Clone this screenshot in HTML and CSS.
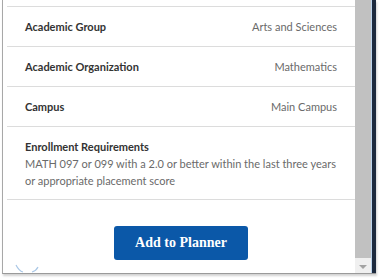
FILE: index.html
```html
<!DOCTYPE html>
<html>
<head>
<meta charset="utf-8">
<link rel="stylesheet" href="styles.css">
</head>
<body>
<div class="frame">
  <div class="content">
    <div class="row">
      <span class="label">Academic Group</span>
      <span class="value">Arts and Sciences</span>
    </div>
    <div class="row">
      <span class="label">Academic Organization</span>
      <span class="value">Mathematics</span>
    </div>
    <div class="row">
      <span class="label">Campus</span>
      <span class="value">Main Campus</span>
    </div>
    <div class="row req">
      <span class="label">Enrollment Requirements</span>
      <span class="desc">MATH 097 or 099 with a 2.0 or better within the last three years or appropriate placement score</span>
    </div>
    <div class="actions">
      <button class="btn">Add to Planner</button>
    </div>
    <svg class="spinner" width="30" height="16" viewBox="0 0 30 16">
      <path d="M3 3 Q6 9 10 10" fill="none" stroke="#a9c7e6" stroke-width="1.2"/>
      <path d="M19 10 Q23 9 25 5" fill="none" stroke="#a9c7e6" stroke-width="1.2"/>
    </svg>
  </div>
  <div class="scrollbar">
    <div class="thumb"></div>
    <div class="arrow"></div>
  </div>
  <div class="edge"></div>
</div>
</body>
</html>
```
FILE: styles.css
```css
html, body {
  margin: 0;
  padding: 0;
  background: #ffffff;
}
body {
  width: 380px;
  height: 280px;
  overflow: hidden;
  font-family: Lato, "Open Sans", sans-serif;
}
.frame {
  margin-left: 2px;
  width: 373px;
  height: 273px;
  border-left: 1px solid #a8a8a8;
  border-bottom: 1px solid #9a9a9a;
  box-shadow: 1px 2px 2px rgba(0,0,0,0.18);
  display: flex;
}
.content {
  position: relative;
  width: 348px;
  padding-left: 4px;
  padding-top: 6px;
  box-sizing: content-box;
}
.row {
  height: 39px;
  border-top: 1px solid #dcdcdc;
  display: flex;
  align-items: center;
  justify-content: space-between;
  padding: 0 18px;
  font-size: 11px;
}
.label {
  font-weight: bold;
  color: #333333;
}
.value {
  color: #6a6a6a;
}
.row.req {
  height: auto;
  display: flex;
  flex-direction: column;
  align-items: flex-start;
  justify-content: flex-start;
  padding-top: 11px;
  padding-bottom: 10px;
  line-height: 17px;
  border-bottom: 1px solid #dcdcdc;
}
.desc {
  color: #6a6a6a;
}
.actions {
  display: flex;
  justify-content: center;
  padding-top: 26px;
}
.btn {
  width: 134px;
  height: 34px;
  background: #0b58a8;
  border: none;
  border-radius: 3px;
  color: #ffffff;
  font-family: "Liberation Serif", serif;
  font-weight: bold;
  font-size: 14px;
  padding: 0;
}
.spinner {
  position: absolute;
  left: 10px;
  top: 262px;
}
.scrollbar {
  width: 16px;
  background: #f0f0f0;
  display: flex;
  flex-direction: column;
  align-items: center;
}
.thumb {
  width: 16px;
  height: 258px;
  background: #c1c1c1;
}
.arrow {
  margin-top: 7px;
  width: 0;
  height: 0;
  border-left: 4px solid transparent;
  border-right: 4px solid transparent;
  border-top: 4px solid #a3a3a3;
}
.edge {
  width: 4px;
  background: #1d2a3e;
  border-left: 1px solid #bcd4ec;
}
```
